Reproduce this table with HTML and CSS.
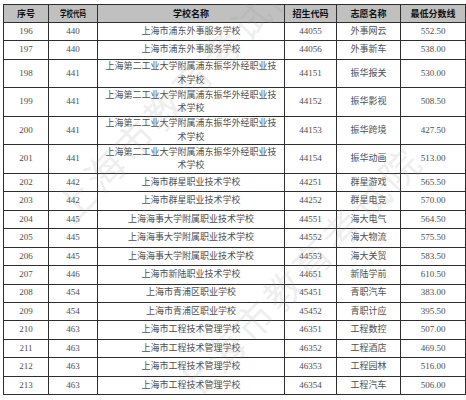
FILE: index.html
```html
<!DOCTYPE html>
<html lang="zh-CN">
<head>
<meta charset="utf-8">
<title>招生录取分数线</title>
<link rel="stylesheet" href="styles.css">
</head>
<body>
<div class="sheet">
<table class="scores">
<colgroup>
<col class="c1"><col class="c2"><col class="c3"><col class="c4"><col class="c5"><col class="c6">
</colgroup>
<thead>
<tr><th>序号</th><th><span class="squeeze">学校代码</span></th><th>学校名称</th><th>招生代码</th><th>志愿名称</th><th>最低分数线</th></tr>
</thead>
<tbody>
<tr class="r1"><td>196</td><td>440</td><td>上海市浦东外事服务学校</td><td>44055</td><td>外事网云</td><td>552.50</td></tr>
<tr class="r1"><td>197</td><td>440</td><td>上海市浦东外事服务学校</td><td>44056</td><td>外事新车</td><td>538.00</td></tr>
<tr class="r2"><td>198</td><td>441</td><td>上海第二工业大学附属浦东振华外经职业技<br>术学校</td><td>44151</td><td>振华报关</td><td>530.00</td></tr>
<tr class="r2"><td>199</td><td>441</td><td>上海第二工业大学附属浦东振华外经职业技<br>术学校</td><td>44152</td><td>振华影视</td><td>508.50</td></tr>
<tr class="r2"><td>200</td><td>441</td><td>上海第二工业大学附属浦东振华外经职业技<br>术学校</td><td>44153</td><td>振华跨境</td><td>427.50</td></tr>
<tr class="r2"><td>201</td><td>441</td><td>上海第二工业大学附属浦东振华外经职业技<br>术学校</td><td>44154</td><td>振华动画</td><td>513.00</td></tr>
<tr class="r1"><td>202</td><td>442</td><td>上海市群星职业技术学校</td><td>44251</td><td>群星游戏</td><td>565.50</td></tr>
<tr class="r1"><td>203</td><td>442</td><td>上海市群星职业技术学校</td><td>44252</td><td>群星电竞</td><td>570.00</td></tr>
<tr class="r1"><td>204</td><td>445</td><td>上海海事大学附属职业技术学校</td><td>44551</td><td>海大电气</td><td>564.50</td></tr>
<tr class="r1"><td>205</td><td>445</td><td>上海海事大学附属职业技术学校</td><td>44552</td><td>海大物流</td><td>575.50</td></tr>
<tr class="r1"><td>206</td><td>445</td><td>上海海事大学附属职业技术学校</td><td>44553</td><td>海大关贸</td><td>583.50</td></tr>
<tr class="r1"><td>207</td><td>446</td><td>上海市新陆职业技术学校</td><td>44651</td><td>新陆学前</td><td>610.50</td></tr>
<tr class="r1"><td>208</td><td>454</td><td>上海市青浦区职业学校</td><td>45451</td><td>青职汽车</td><td>383.00</td></tr>
<tr class="r1"><td>209</td><td>454</td><td>上海市青浦区职业学校</td><td>45452</td><td>青职计应</td><td>395.50</td></tr>
<tr class="r1"><td>210</td><td>463</td><td>上海市工程技术管理学校</td><td>46351</td><td>工程数控</td><td>507.00</td></tr>
<tr class="r1"><td>211</td><td>463</td><td>上海市工程技术管理学校</td><td>46352</td><td>工程酒店</td><td>469.50</td></tr>
<tr class="r1"><td>212</td><td>463</td><td>上海市工程技术管理学校</td><td>46353</td><td>工程园林</td><td>516.00</td></tr>
<tr class="r1"><td>213</td><td>463</td><td>上海市工程技术管理学校</td><td>46354</td><td>工程汽车</td><td>506.00</td></tr>
</tbody>
</table>
<div class="watermark wm-a">上海市教育考试院</div>
<div class="watermark wm-b">上海市教育考试院</div>
</div>
</body>
</html>
```

FILE: styles.css
```css
html, body {
  margin: 0;
  padding: 0;
  background: #ffffff;
}

body {
  padding: 4px 0 0 3px;
  font-family: "Liberation Serif", "Noto Sans CJK SC", serif;
  overflow: hidden;
}

.sheet {
  position: relative;
  width: 463px;
  overflow: hidden;
}

.scores {
  width: 462px;
  table-layout: fixed;
  border-collapse: collapse;
  font-size: 9px;
  color: #4e4e4e;
}

.c1 { width: 45px; }
.c2 { width: 49px; }
.c3 { width: 187px; }
.c4 { width: 52px; }
.c5 { width: 64px; }
.c6 { width: 65px; }

.scores th,
.scores td {
  border: 1px solid #2e2e2e;
  padding: 0;
  text-align: center;
  vertical-align: middle;
  line-height: 13.5px;
  white-space: nowrap;
}

.scores th {
  background: #c0c0c0;
  color: #111111;
  font-weight: bold;
  height: 17px;
  font-family: "Noto Sans CJK SC", sans-serif;
}

.squeeze {
  display: inline-block;
  transform: scaleX(0.72);
}

.r1 { height: 18.45px; }
.r2 { height: 28.5px; }

.watermark {
  position: absolute;
  font-family: "Noto Sans CJK SC", sans-serif;
  font-size: 38px;
  font-weight: normal;
  letter-spacing: 4px;
  color: rgba(150, 150, 150, 0.17);
  white-space: nowrap;
  transform-origin: 0 50%;
  transform: rotate(-46deg);
  pointer-events: none;
}

.wm-a {
  left: 58px;
  top: 182px;
}

.wm-b {
  left: 178px;
  top: 362px;
}
```
